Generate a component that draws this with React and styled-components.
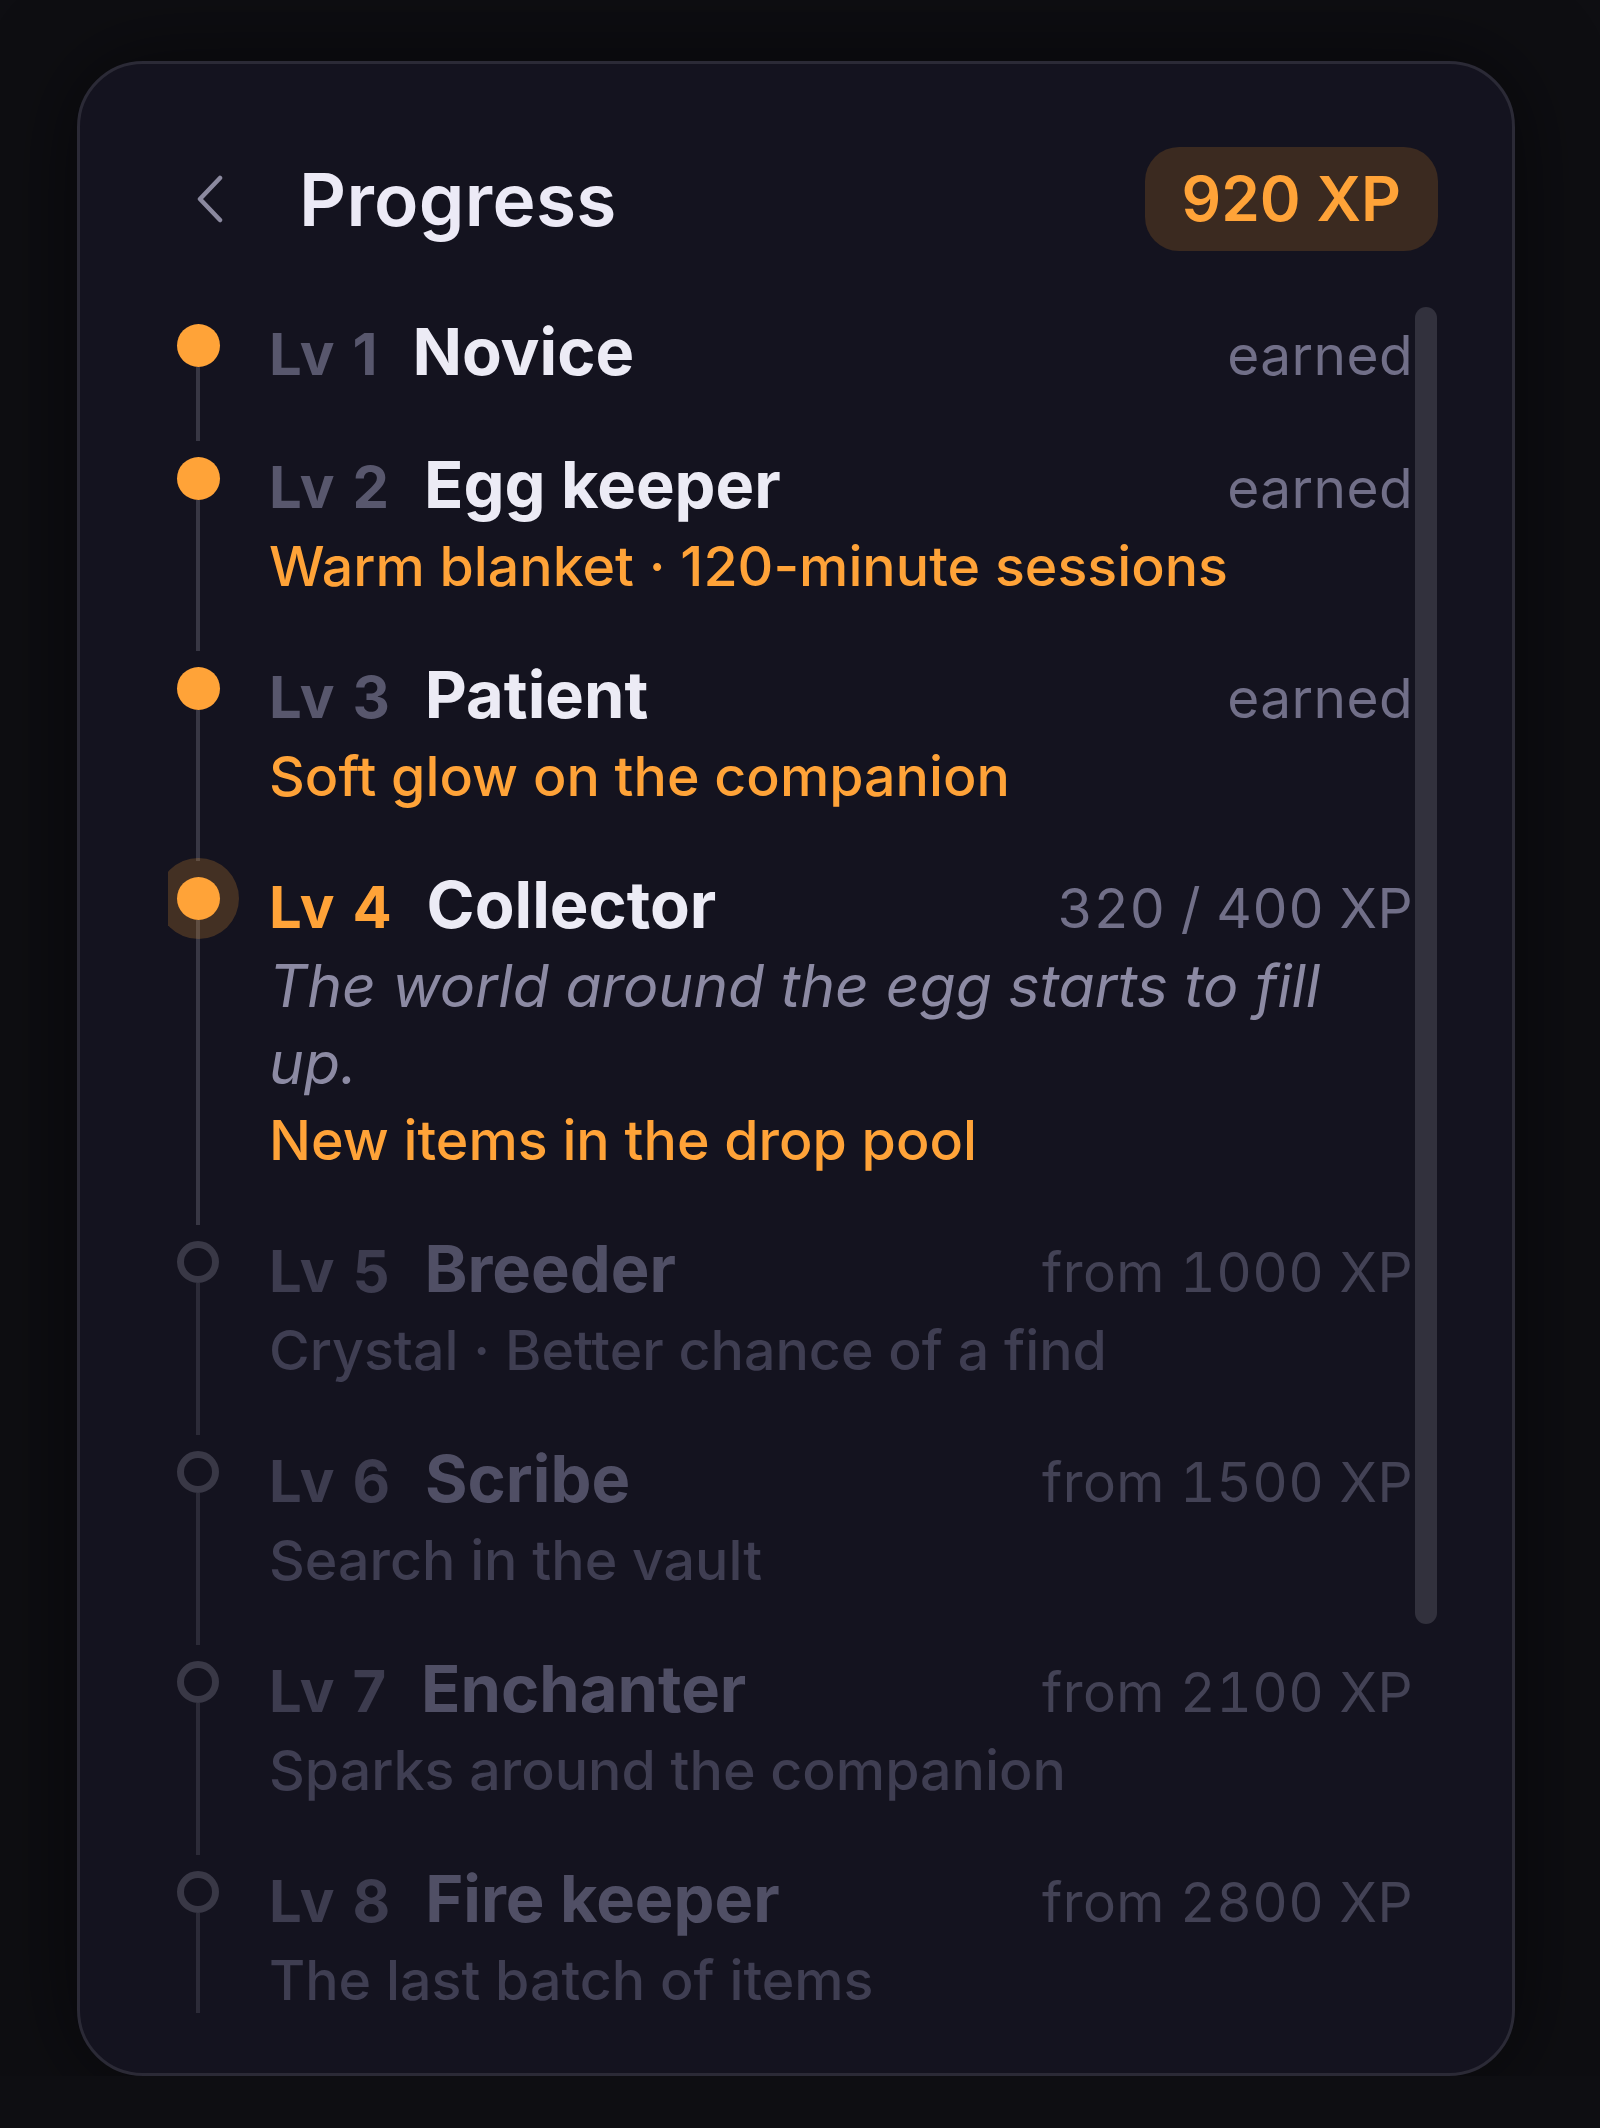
import React from 'react';
import styled, { createGlobalStyle, css } from 'styled-components';

const orange = '#ffa338';

const GlobalStyle = createGlobalStyle`
  html, body {
    margin: 0;
    padding: 0;
    background: #0e0e12;
  }
  body {
    font-family: Inter, "Noto Sans", sans-serif;
    -webkit-font-smoothing: antialiased;
  }
`;

const Card = styled.div`
  box-sizing: border-box;
  margin: 61px 0 0 77px;
  width: 1438px;
  height: 2015px;
  padding: 83px 74px 60px 88px;
  background: #14131f;
  border: 3px solid #2b2a36;
  border-radius: 66px;
  box-shadow: 0 0 90px rgba(0, 0, 0, 0.55);
  display: flex;
  flex-direction: column;
`;

const Header = styled.header`
  display: flex;
  align-items: center;
  height: 104px;
  margin-bottom: 56px;
  padding-left: 28px;
`;

const BackButton = styled.button`
  display: flex;
  align-items: center;
  padding: 0;
  border: 0;
  background: none;
  color: #8b899f;
  cursor: pointer;
`;

const Title = styled.h1`
  margin: 0 0 0 75px;
  font-size: 73px;
  font-weight: 600;
  color: #eceaf6;
  letter-spacing: 0.3px;
`;

const XpBadge = styled.div`
  margin-left: auto;
  height: 104px;
  padding: 0 37px;
  border-radius: 34px;
  background: #3b2a20;
  color: ${orange};
  font-size: 62px;
  font-weight: 600;
  line-height: 104px;
`;

const ListViewport = styled.div`
  position: relative;
  height: 1706px;
  overflow: hidden;
`;

const List = styled.ol`
  list-style: none;
  margin: 0;
  padding: 7px 25px 0 0;
`;

const ScrollThumb = styled.div`
  position: absolute;
  top: 0;
  right: 1px;
  width: 22px;
  height: 1317px;
  border-radius: 11px;
  background: #32313d;
`;

const Row = styled.li`
  display: grid;
  grid-template-columns: 60px 1fr;
  column-gap: 41px;
  margin-bottom: 6px;
`;

const Rail = styled.div`
  display: flex;
  flex-direction: column;
  align-items: center;
`;

const Dot = styled.span`
  flex: none;
  box-sizing: border-box;
  border-radius: 50%;
  position: relative;
  z-index: 1;
  ${p =>
    p.$state === 'locked'
      ? css`
          width: 42px;
          height: 42px;
          margin-top: 10px;
          border: 7px solid #393846;
        `
      : css`
          width: 43px;
          height: 43px;
          margin-top: 10px;
          background: ${orange};
        `}
  ${p =>
    p.$state === 'current' &&
    css`
      box-shadow: 0 0 0 19px rgba(255, 163, 56, 0.2);
    `}
`;

const Line = styled.span`
  flex: 1;
  width: 4px;
  background: ${p => (p.$locked ? '#2c2b38' : '#383744')};
`;

const Body = styled.div`
  padding-bottom: 47px;
  min-width: 0;
`;

const HeadLine = styled.div`
  display: flex;
  align-items: baseline;
  height: 80px;
  line-height: 76px;
`;

const LevelTag = styled.span`
  font-size: 58px;
  font-weight: 700;
  line-height: 68px;
  letter-spacing: 2px;
  color: ${p =>
    p.$state === 'current' ? orange : p.$state === 'locked' ? '#3d3c4f' : '#58576d'};
  margin-right: 33px;
`;

const Name = styled.span`
  font-size: 65px;
  font-weight: 700;
  color: ${p => (p.$state === 'locked' ? '#504f65' : '#ecebf5')};
`;

const Status = styled.span`
  margin-left: auto;
  font-size: 55px;
  font-weight: 400;
  line-height: 68px;
  letter-spacing: 0.4px;
  font-variant-numeric: tabular-nums;
  color: ${p => (p.$state === 'locked' ? '#434255' : '#716f88')};
`;

const Description = styled.p`
  margin: 0;
  max-width: 1100px;
  font-size: 59px;
  font-style: italic;
  line-height: 77px;
  color: #8c8aa3;
`;

const Reward = styled.p`
  margin: 0;
  font-size: 55.5px;
  font-weight: 500;
  line-height: 77px;
  color: ${p => (p.$state === 'locked' ? '#3f3e52' : orange)};
`;

const levels = [
  { n: 1, name: 'Novice', state: 'done', status: 'earned' },
  {
    n: 2,
    name: 'Egg keeper',
    state: 'done',
    status: 'earned',
    reward: 'Warm blanket · 120-minute sessions'
  },
  {
    n: 3,
    name: 'Patient',
    state: 'done',
    status: 'earned',
    reward: 'Soft glow on the companion'
  },
  {
    n: 4,
    name: 'Collector',
    state: 'current',
    status: '320 / 400 XP',
    desc: 'The world around the egg starts to fill up.',
    reward: 'New items in the drop pool'
  },
  {
    n: 5,
    name: 'Breeder',
    state: 'locked',
    status: 'from 1000 XP',
    reward: 'Crystal · Better chance of a find'
  },
  {
    n: 6,
    name: 'Scribe',
    state: 'locked',
    status: 'from 1500 XP',
    reward: 'Search in the vault'
  },
  {
    n: 7,
    name: 'Enchanter',
    state: 'locked',
    status: 'from 2100 XP',
    reward: 'Sparks around the companion'
  },
  {
    n: 8,
    name: 'Fire keeper',
    state: 'locked',
    status: 'from 2800 XP',
    reward: 'The last batch of items'
  }
];

const ChevronLeft = () => (
  <svg width="28" height="48" viewBox="0 0 28 48" fill="none">
    <polyline
      points="24,3 4,24 24,45"
      stroke="currentColor"
      strokeWidth="4.5"
      strokeLinecap="round"
      strokeLinejoin="round"
    />
  </svg>
);

const LevelRow = ({ level }) => (
  <Row>
    <Rail>
      <Dot $state={level.state} />
      <Line $locked={level.state === 'locked'} />
    </Rail>
    <Body>
      <HeadLine>
        <LevelTag $state={level.state}>Lv {level.n}</LevelTag>
        <Name $state={level.state}>{level.name}</Name>
        <Status $state={level.state}>{level.status}</Status>
      </HeadLine>
      {level.desc && <Description>{level.desc}</Description>}
      {level.reward && <Reward $state={level.state}>{level.reward}</Reward>}
    </Body>
  </Row>
);

export default function App() {
  return (
    <>
      <GlobalStyle />
      <Card>
        <Header>
          <BackButton aria-label="Back">
            <ChevronLeft />
          </BackButton>
          <Title>Progress</Title>
          <XpBadge>920 XP</XpBadge>
        </Header>
        <ListViewport>
          <List>
            {levels.map(level => (
              <LevelRow key={level.n} level={level} />
            ))}
          </List>
          <ScrollThumb />
        </ListViewport>
      </Card>
    </>
  );
}
